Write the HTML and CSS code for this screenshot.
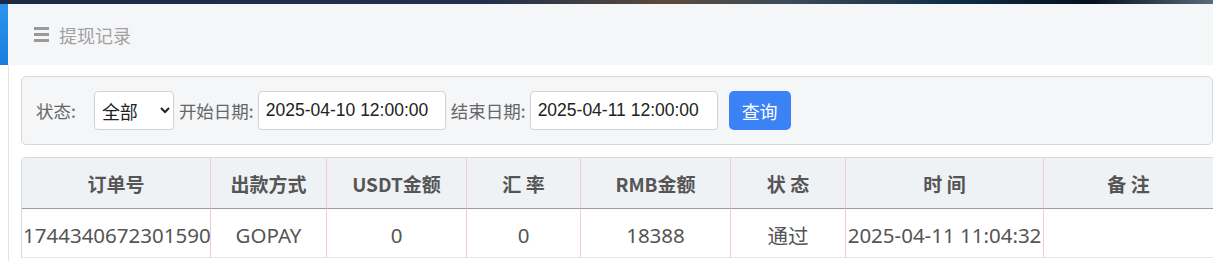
FILE: index.html
```html
<!DOCTYPE html>
<html lang="zh-CN">
<head>
  <meta charset="UTF-8" />
  <title>提现记录</title>
  <link rel="stylesheet" href="styles.css">
</head>
<body>
  <div class="top-strip"></div>
  <div class="layout">
    <div class="side">
      <div class="side-top"></div>
    </div>
    <div class="main">
      <div class="page-head">
        <span class="menu-icon"><i></i><i></i><i></i></span>
        <span class="page-title">提现记录</span>
      </div>
      <div class="content">
        <form class="filter">
          <label class="lbl lbl-status">状态:</label>
          <select class="ctl sel">
            <option>全部</option>
            <option>通过</option>
            <option>拒绝</option>
          </select>
          <label class="lbl">开始日期:</label>
          <input class="ctl date" type="text" value="2025-04-10 12:00:00">
          <label class="lbl">结束日期:</label>
          <input class="ctl date" type="text" value="2025-04-11 12:00:00">
          <button type="button" class="btn-query">查询</button>
        </form>

        <table class="records">
          <thead>
            <tr>
              <th class="c1">订单号</th>
              <th class="c2">出款方式</th>
              <th class="c3">USDT金额</th>
              <th class="c4">汇 率</th>
              <th class="c5">RMB金额</th>
              <th class="c6">状 态</th>
              <th class="c7">时 间</th>
              <th class="c8">备 注</th>
            </tr>
          </thead>
          <tbody>
            <tr>
              <td>1744340672301590</td>
              <td>GOPAY</td>
              <td>0</td>
              <td>0</td>
              <td>18388</td>
              <td>通过</td>
              <td>2025-04-11 11:04:32</td>
              <td></td>
            </tr>
          </tbody>
        </table>
      </div>
    </div>
  </div>
</body>
</html>
```

FILE: styles.css
```css
body {
  margin: 0;
  font-family: "Noto Sans", "Noto Sans CJK SC", sans-serif;
  background: #fff;
  color: #555;
  overflow: hidden;
}

.top-strip {
  height: 4px;
  background: linear-gradient(90deg, #1d2a44 0%, #22304c 40%, #5a4a3a 55%, #3d4a5a 65%, #0b2a44 80%, #07101c 90%, #5a6a78 100%);
}

.layout {
  display: flex;
}

.side {
  width: 8px;
  flex: none;
}

.side-top {
  height: 61px;
  background: linear-gradient(180deg, #2b95ea, #1a7de0);
}

.main {
  flex: 1;
  min-width: 0;
}

.page-head {
  height: 61px;
  background: #f5f6f8;
  display: flex;
  align-items: center;
  padding-left: 26px;
}

.menu-icon {
  display: flex;
  flex-direction: column;
  justify-content: space-between;
  width: 15px;
  height: 15px;
  margin-right: 10px;
}

.menu-icon i {
  display: block;
  height: 3px;
  background: #9a9a9a;
}

.page-title {
  font-size: 18px;
  color: #a0a0a0;
  font-family: "Noto Sans CJK SC", sans-serif;
}

.content {
  border-left: 1px solid #e4e4e4;
  padding: 11px 0 20px 12px;
}

.filter {
  margin: 0;
  display: flex;
  align-items: center;
  height: 67px;
  padding: 0 14px;
  background: #f5f6f8;
  border: 1px solid #d5d8dc;
  border-radius: 5px;
}

.lbl {
  font-size: 17.5px;
  color: #666;
  font-family: "Noto Sans CJK SC", sans-serif;
  margin: 0 4px 0 5px;
}

.lbl-status {
  margin: 0 18px 0 0;
}

.ctl {
  height: 39px;
  box-sizing: border-box;
  border: 1px solid #d2d2d2;
  border-radius: 4px;
  background: #fff;
  font-size: 17.5px;
  color: #222;
  font-family: "Liberation Sans", "Noto Sans CJK SC", sans-serif;
}

.sel {
  width: 80px;
  padding: 0 3px;
  font-size: 18px;
  font-family: "Noto Sans CJK SC", sans-serif;
}

.date {
  width: 188px;
  padding: 0 7px;
}

.btn-query {
  margin-left: 11px;
  width: 62px;
  height: 39px;
  border: none;
  border-radius: 5px;
  background: #3b82f6;
  color: #fff;
  font-size: 18px;
  font-family: "Noto Sans CJK SC", sans-serif;
}

.records {
  margin-top: 12px;
  width: 100%;
  border-collapse: separate;
  border-spacing: 0;
  table-layout: fixed;
  border-top: 1px solid #d7d9dc;
  border-left: 1px solid #d7d9dc;
  border-radius: 5px 0 0 0;
}

.records th {
  height: 50px;
  background: #eff2f5;
  font-size: 19px;
  font-weight: bold;
  color: #555;
  border-bottom: 1px solid #a39a9a;
  border-right: 1px solid #f3cccc;
  font-family: "Noto Sans CJK SC", sans-serif;
  padding: 0;
}

.records th:first-child {
  border-radius: 5px 0 0 0;
}

.records td {
  height: 49px;
  font-size: 20.5px;
  color: #555;
  text-align: center;
  border-bottom: 1px solid #e6e6e6;
  border-right: 1px solid #f3cccc;
  padding: 3px 0 0;
  box-sizing: border-box;
  white-space: nowrap;
}

.records td:first-child {
  text-align: left;
  padding-left: 1px;
}

.records th:last-child,
.records td:last-child {
  border-right: none;
}

.c1 { width: 188px; }
.c2 { width: 115px; }
.c3 { width: 139px; }
.c4 { width: 113px; }
.c5 { width: 149px; }
.c6 { width: 114px; }
.c7 { width: 197px; }
```
